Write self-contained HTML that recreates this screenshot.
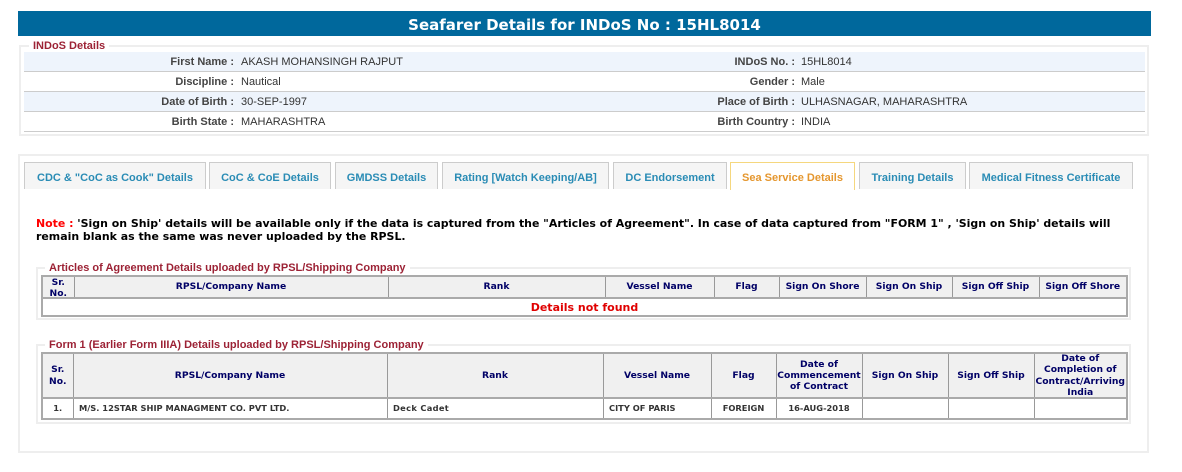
<!DOCTYPE html>
<html><head><meta charset="utf-8">
<style>
html,body{margin:0;padding:0;width:1182px;height:472px;overflow:hidden;background:#fff}
.a{position:absolute;white-space:nowrap}
#banner{left:18px;top:11px;width:1133px;height:25px;background:#00689c;color:#fff;font:bold 15px/28px "DejaVu Sans",sans-serif;text-align:center}
.fs{border:2px solid #eee;box-sizing:border-box}
.leg{background:#fff;color:#9c2235;font:bold 11px/12px "Liberation Sans",sans-serif;padding:0 4px}
.row{left:24px;width:1121px;height:19px;border-bottom:1px solid #ccc;box-sizing:content-box}
.lab{font:bold 11px/20px "Liberation Sans",sans-serif;color:#444;text-align:right}
.val{font:11px/20px "Liberation Sans",sans-serif;color:#333}
.tab{top:162px;height:27px;box-sizing:border-box;background:#f5f5f5;border:1px solid #ccc;border-bottom:0;color:#2a8cb5;font:bold 11px/30px "Liberation Sans",sans-serif;text-align:center}
.tab.on{background:#fff;border-color:#f5d77e;height:28px;color:#e5972f}
.note{font:bold 10.94px/14px "DejaVu Sans",sans-serif;color:#000;left:36px;width:1100px}
table{position:absolute;border-collapse:collapse;table-layout:fixed;border:2px solid #aaa}
th{background:#f0f0f0;color:#000066;font:bold 9.2px/11.3px "DejaVu Sans",sans-serif;border:1px solid #999;border-top:0;border-bottom:2px solid #aaa;padding:0;text-align:center}
td{font:bold 8.3px/11px "DejaVu Sans",sans-serif;color:#333;border:1px solid #999;padding:0 5.5px;white-space:nowrap}
td.c{text-align:center;padding:0}
</style></head><body>
<div class="a" id="banner">Seafarer Details for INDoS No : 15HL8014</div>

<div class="a fs" style="left:19px;top:45px;width:1130px;height:91px"></div>
<div class="a leg" style="left:29px;top:40px">INDoS Details</div>
<div class="a row" style="top:52px;background:#eef4fc"></div>
<div class="a row" style="top:72px"></div>
<div class="a row" style="top:92px;background:#eef4fc"></div>
<div class="a row" style="top:112px"></div>

<div class="a lab" style="right:948px;top:52px">First Name :</div><div class="a val" style="left:241px;top:52px">AKASH MOHANSINGH RAJPUT</div>
<div class="a lab" style="right:948px;top:72px">Discipline :</div><div class="a val" style="left:241px;top:72px">Nautical</div>
<div class="a lab" style="right:948px;top:92px">Date of Birth :</div><div class="a val" style="left:241px;top:92px">30-SEP-1997</div>
<div class="a lab" style="right:948px;top:112px">Birth State :</div><div class="a val" style="left:241px;top:112px">MAHARASHTRA</div>
<div class="a lab" style="right:387px;top:52px">INDoS No. :</div><div class="a val" style="left:801px;top:52px">15HL8014</div>
<div class="a lab" style="right:387px;top:72px">Gender :</div><div class="a val" style="left:801px;top:72px">Male</div>
<div class="a lab" style="right:387px;top:92px">Place of Birth :</div><div class="a val" style="left:801px;top:92px">ULHASNAGAR, MAHARASHTRA</div>
<div class="a lab" style="right:387px;top:112px">Birth Country :</div><div class="a val" style="left:801px;top:112px">INDIA</div>

<div class="a fs" style="left:18px;top:154px;width:1131px;height:299px"></div>
<div class="a tab" style="left:24px;width:182px">CDC &amp; "CoC as Cook" Details</div>
<div class="a tab" style="left:209px;width:122px">CoC &amp; CoE Details</div>
<div class="a tab" style="left:335px;width:103px">GMDSS Details</div>
<div class="a tab" style="left:442px;width:167px">Rating [Watch Keeping/AB]</div>
<div class="a tab" style="left:613px;width:114px">DC Endorsement</div>
<div class="a tab on" style="left:730px;width:125px">Sea Service Details</div>
<div class="a tab" style="left:859px;width:107px">Training Details</div>
<div class="a tab" style="left:969px;width:164px">Medical Fitness Certificate</div>

<div class="a note" style="top:217px"><span style="color:#f00">Note :</span> 'Sign on Ship' details will be available only if the data is captured from the "Articles of Agreement". In case of data captured from "FORM 1" , 'Sign on Ship' details will</div>
<div class="a note" style="top:230px">remain blank as the same was never uploaded by the RPSL.</div>

<div class="a fs" style="left:36px;top:267px;width:1095px;height:53px"></div>
<div class="a leg" style="left:45px;top:262px">Articles of Agreement Details uploaded by RPSL/Shipping Company</div>
<table style="left:41px;top:275px;width:1085px;height:40px">
<colgroup><col style="width:32px"><col style="width:314px"><col style="width:217px"><col style="width:109px"><col style="width:65px"><col style="width:87px"><col style="width:86px"><col style="width:87px"><col style="width:88px"></colgroup>
<tr style="height:21px"><th><div style="height:20px">Sr.<br>No.</div></th><th>RPSL/Company Name</th><th>Rank</th><th>Vessel Name</th><th>Flag</th><th>Sign On Shore</th><th>Sign On Ship</th><th>Sign Off Ship</th><th>Sign Off Shore</th></tr>
<tr style="height:15px"><td colspan="9" style="text-align:center;color:#e00000;font-size:11px;line-height:15px;background:#fff;padding-top:1px">Details not found</td></tr>
</table>

<div class="a fs" style="left:36px;top:344px;width:1095px;height:80px"></div>
<div class="a leg" style="left:45px;top:339px">Form 1 (Earlier Form IIIA) Details uploaded by RPSL/Shipping Company</div>
<table style="left:41px;top:352px;width:1085px;height:66px">
<colgroup><col style="width:31px"><col style="width:314px"><col style="width:216px"><col style="width:108px"><col style="width:65px"><col style="width:86px"><col style="width:86px"><col style="width:86px"><col style="width:93px"></colgroup>
<tr style="height:44px"><th>Sr.<br>No.</th><th>RPSL/Company Name</th><th>Rank</th><th>Vessel Name</th><th>Flag</th><th>Date of<br>Commencement<br>of Contract</th><th>Sign On Ship</th><th>Sign Off Ship</th><th style="white-space:nowrap"><div style="height:43px;position:relative;top:-1px">Date of<br>Completion of<br>Contract/Arriving<br>India</div></th></tr>
<tr style="height:21px"><td class="c">1.</td><td>M/S. 12STAR SHIP MANAGMENT CO. PVT LTD.</td><td style="letter-spacing:.3px">Deck Cadet</td><td>CITY OF PARIS</td><td class="c">FOREIGN</td><td class="c">16-AUG-2018</td><td></td><td></td><td></td></tr>
</table>
</body></html>
